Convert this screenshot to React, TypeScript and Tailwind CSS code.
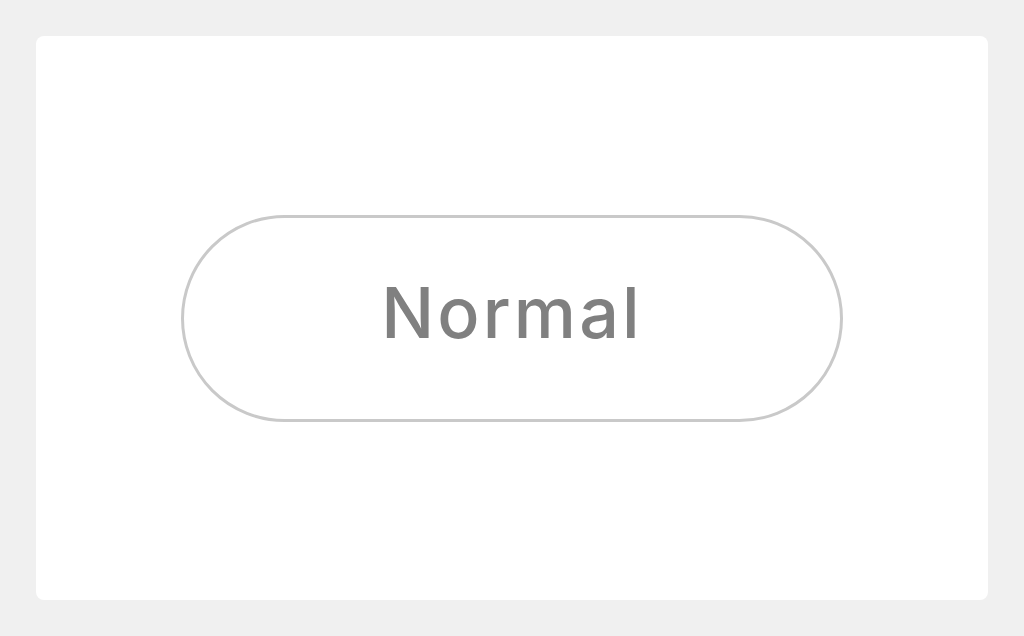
export default function App() {
  return (
    <div className="flex h-[636px] w-[1024px] bg-[#f0f0f0] p-9">
      <div className="flex flex-1 items-center justify-center rounded-lg bg-white">
        <button
          type="button"
          className="flex h-[207px] w-[662px] items-center justify-center rounded-full border-[3px] border-[#c9c9c9] bg-white pb-[10px]"
        >
          <span
            className="text-[70px] font-medium leading-none tracking-[0.045em] text-[#808080]"
            style={{ fontFamily: "Inter, 'Noto Sans', sans-serif" }}
          >
            Normal
          </span>
        </button>
      </div>
    </div>
  );
}
